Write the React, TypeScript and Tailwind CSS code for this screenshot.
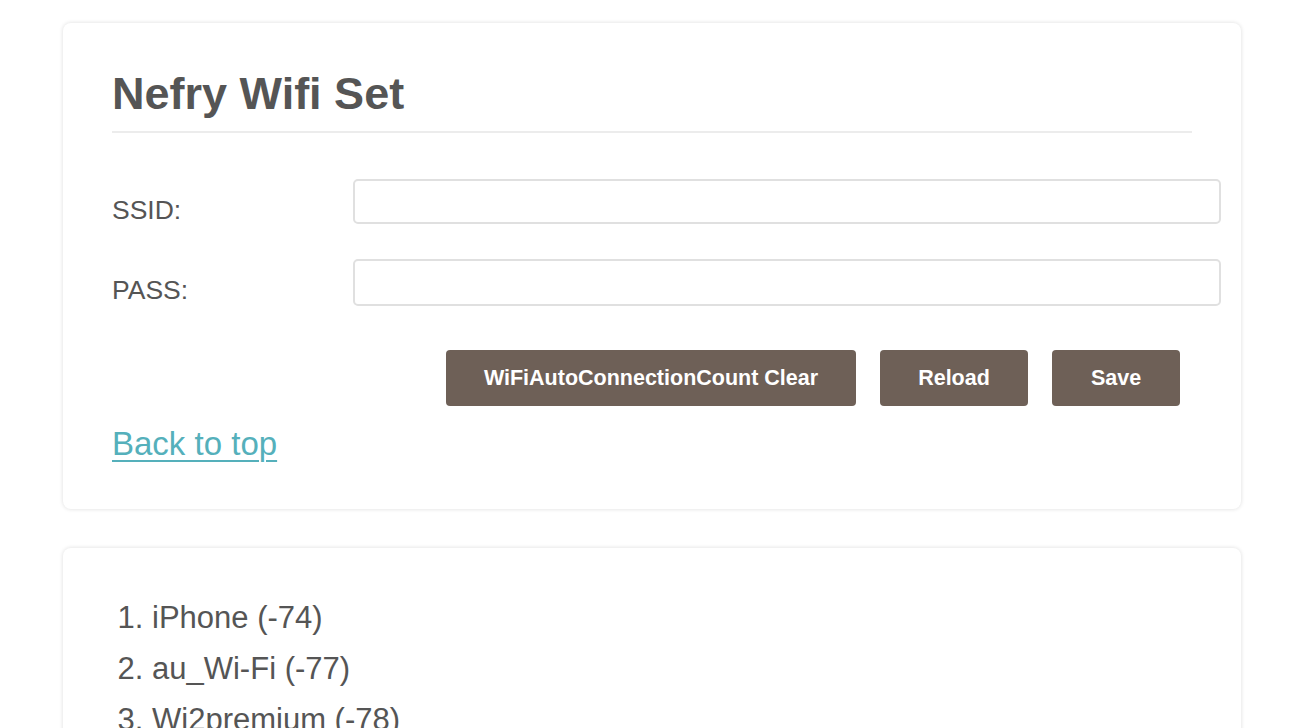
const networks = ['iPhone (-74)', 'au_Wi-Fi (-77)', 'Wi2premium (-78)', 'Wi2 (-79)', 'docomo (-82)'];

export default function App() {
  return (
    <div className="min-h-screen bg-white pl-[63px] pr-[69px] pt-[23px] pb-10 text-[#555] font-['Liberation_Sans',Arial,sans-serif]">
      <div className="rounded-lg bg-white shadow-[0_0_4px_rgba(0,0,0,0.14)] pl-[49px] pr-[20px] pt-[44px] pb-[45px]">
        <h1 className="mr-[29px] border-b-2 border-[#ececec] pb-[10px] text-[45px] font-bold leading-[54px] text-[#555]">
          Nefry Wifi Set
        </h1>

        <div className="mt-[46px] flex items-start">
          <label className="w-[241px] pt-[16px] text-[26.5px] leading-[30px]">SSID:</label>
          <input type="text" className="h-[45px] flex-1 rounded-[5px] border-2 border-[#e0e0e0] bg-white px-3 outline-none" />
        </div>
        <div className="mt-[34px] flex items-start">
          <label className="w-[241px] pt-[16px] text-[26.5px] leading-[30px]">PASS:</label>
          <input type="password" className="h-[47px] flex-1 rounded-[5px] border-2 border-[#e0e0e0] bg-white px-3 outline-none" />
        </div>

        <div className="mt-[44px] mr-[41px] flex justify-end gap-6">
          <button type="button" className="h-[56px] w-[410px] rounded-[4px] bg-[#6e6057] text-[21.5px] font-bold text-white">
            WiFiAutoConnectionCount Clear
          </button>
          <button type="button" className="h-[56px] w-[148px] rounded-[4px] bg-[#6e6057] text-[21.5px] font-bold text-white">
            Reload
          </button>
          <button type="button" className="h-[56px] w-[128px] rounded-[4px] bg-[#6e6057] text-[21.5px] font-bold text-white">
            Save
          </button>
        </div>

        <a href="#" className="mt-[18px] block w-fit text-[33px] leading-[40px] text-[#55b0bb] underline decoration-2 underline-offset-[5px]">
          Back to top
        </a>
      </div>

      <div className="mt-[39px] rounded-lg bg-white shadow-[0_0_4px_rgba(0,0,0,0.14)] pl-[49px] pr-[20px] pt-[44px] pb-10">
        <ol className="list-decimal pl-[40px] text-[31px] leading-[51px] text-[#555]">
          {networks.map((n) => (
            <li key={n}>{n}</li>
          ))}
        </ol>
      </div>
    </div>
  );
}
